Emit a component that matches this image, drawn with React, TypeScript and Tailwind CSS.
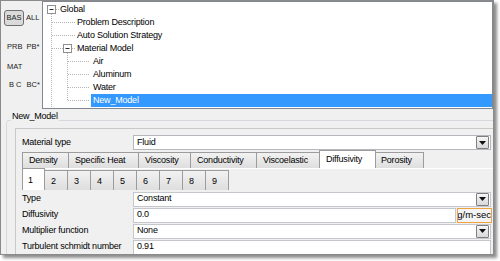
import React from "react";

function Arrow() {
  return (
    <div className="w-[13px] h-[13px] border border-[#7f7f7f] bg-gradient-to-b from-[#f6f6f6] to-[#d8d8d8] flex items-center justify-center rounded-[1px] shrink-0">
      <svg width="7" height="4" viewBox="0 0 7 4">
        <path d="M0 0H7L3.5 4Z" fill="#111" />
      </svg>
    </div>
  );
}

function TreeLines() {
  const d = "1 1";
  const c = "#b4b4b4";
  return (
    <svg className="absolute left-0 top-0 pointer-events-none" width="60" height="106" viewBox="0 0 60 106">
      <path d="M8.5 12V106" stroke={c} strokeDasharray={d} />
      <path d="M13 7.5H16" stroke={c} strokeDasharray={d} />
      <path d="M9 20.5H32" stroke={c} strokeDasharray={d} />
      <path d="M9 33.5H32" stroke={c} strokeDasharray={d} />
      <path d="M9 46.5H20" stroke={c} strokeDasharray={d} />
      <path d="M29 46.5H32" stroke={c} strokeDasharray={d} />
      <path d="M24.5 51V98.5" stroke={c} strokeDasharray={d} />
      <path d="M25 59.5H47" stroke={c} strokeDasharray={d} />
      <path d="M25 72.5H47" stroke={c} strokeDasharray={d} />
      <path d="M25 85.5H47" stroke={c} strokeDasharray={d} />
      <path d="M25 98.5H47" stroke={c} strokeDasharray={d} />
      <rect x="4.5" y="3.5" width="8" height="8" fill="#fff" stroke="#8e8f8f" />
      <path d="M6.5 7.5H10.5" stroke="#2b2b2b" />
      <rect x="20.5" y="42.5" width="8" height="8" fill="#fff" stroke="#8e8f8f" />
      <path d="M22.5 46.5H26.5" stroke="#2b2b2b" />
    </svg>
  );
}

function Tab({ label, w, selected }: { label: string; w: string; selected?: boolean }) {
  return (
    <div
      className={
        selected
          ? `${w} h-[18px] bg-white border border-b-0 border-[#9c9c9c] pl-[6px] pt-[2px] leading-[12px] -mx-[1px] relative z-10`
          : `${w} h-[16px] bg-gradient-to-b from-[#f2f2f2] to-[#dedede] border border-b-0 border-[#9c9c9c] border-r-0 last:border-r pl-[6px] leading-[15px]`
      }
    >
      {label}
    </div>
  );
}

function NumTab({ label, selected }: { label: string; selected?: boolean }) {
  return (
    <div
      className={
        selected
          ? "w-[23px] h-[22px] bg-white border border-b-0 border-[#9c9c9c] pl-[5px] pt-[5px] leading-[12px] relative z-10"
          : "w-[23px] h-[20px] bg-gradient-to-b from-[#f2f2f2] to-[#dedede] border border-b-0 border-l-0 border-[#9c9c9c] pl-[6px] pt-[4px] leading-[12px]"
      }
    >
      {label}
    </div>
  );
}

export default function App() {
  return (
    <div className="w-[500px] h-[261px] bg-white font-['Liberation_Sans',Arial,sans-serif] text-[9px] tracking-[-0.2px] text-black">
      <div className="w-[494px] h-[255px] bg-[#f0f0f0] border border-[#8a8a8a] overflow-hidden flex flex-col shadow-[3px_3px_3px_rgba(0,0,0,0.45)]">
        {/* top section */}
        <div className="flex h-[108px] shrink-0">
          <div className="w-[41px] shrink-0 flex flex-col text-[7.5px] tracking-normal text-[#222]">
            <div className="flex items-center mt-[9px] pl-[3px] h-[16px]">
              <div className="w-[20px] h-[16px] rounded-[3px] border border-[#6f6f6f] bg-[#dadada] flex items-center justify-center">
                BAS
              </div>
              <span className="ml-[2px]">ALL</span>
            </div>
            <div className="flex items-center mt-[15px] h-[12px] pl-[6px]">
              <span>PRB</span>
              <span className="ml-[4px]">PB*</span>
            </div>
            <div className="flex items-center mt-[8px] h-[12px] pl-[6px]">
              <span>MAT</span>
            </div>
            <div className="flex items-center mt-[6px] h-[12px] pl-[8px]">
              <span>B C</span>
              <span className="ml-[5px]">BC*</span>
            </div>
          </div>
          <div className="flex-1 bg-white border border-[#828790] relative pt-[1px] overflow-hidden">
            <TreeLines />
            <div className="h-[13px] flex items-center pl-[17px]">Global</div>
            <div className="h-[13px] flex items-center pl-[34px]">Problem Description</div>
            <div className="h-[13px] flex items-center pl-[34px]">Auto Solution Strategy</div>
            <div className="h-[13px] flex items-center pl-[34px]">Material Model</div>
            <div className="h-[13px] flex items-center pl-[50px]">Air</div>
            <div className="h-[13px] flex items-center pl-[50px]">Aluminum</div>
            <div className="h-[13px] flex items-center pl-[50px]">Water</div>
            <div className="h-[13px] flex pl-[48px]">
              <div className="flex-1 bg-[#3399ff] text-white flex items-center pl-[2px]">New_Model</div>
            </div>
          </div>
        </div>

        {/* group box */}
        <div className="ml-[5px] mt-[11px] relative">
          <div className="w-[520px] h-[200px] border border-[#d5d9dd] rounded-[3px] pt-[7px] pl-[8px]">
            <div className="w-[500px] h-[180px] border border-[#c9c9c9] bg-[#f0f0f0] pt-[6px] pl-[6px] flex flex-col">
              <div className="flex items-center h-[15px]">
                <div className="w-[111px] shrink-0">Material type</div>
                <div className="w-[358px] h-[15px] bg-white border border-[#b4b7bc] flex items-center justify-between pl-[3px] pr-[1px]">
                  <span>Fluid</span>
                  <Arrow />
                </div>
              </div>
              <div className="flex items-end h-[18px]">
                <Tab label="Density" w="w-[46px]" />
                <Tab label="Specific Heat" w="w-[70px]" />
                <Tab label="Viscosity" w="w-[52px]" />
                <Tab label="Conductivity" w="w-[66px]" />
                <Tab label="Viscoelastic" w="w-[64px]" />
                <Tab label="Diffusivity" w="w-[57px]" selected />
                <div className="w-[49px] h-[16px] bg-gradient-to-b from-[#f2f2f2] to-[#dedede] border border-b-0 border-l-0 border-[#9c9c9c] pl-[6px] leading-[15px]">
                  Porosity
                </div>
              </div>
              <div className="flex items-end h-[22px] border-t border-[#ffffff]">
                <NumTab label="1" selected />
                <NumTab label="2" />
                <NumTab label="3" />
                <NumTab label="4" />
                <NumTab label="5" />
                <NumTab label="6" />
                <NumTab label="7" />
                <NumTab label="8" />
                <NumTab label="9" />
              </div>
              <div className="flex flex-col mt-[1px]">
                <div className="flex items-center h-[16px]">
                  <div className="w-[111px] shrink-0">Type</div>
                  <div className="w-[358px] h-[15px] bg-white border border-[#c4c7cc] flex items-center justify-between pl-[3px] pr-[1px]">
                    <span>Constant</span>
                    <Arrow />
                  </div>
                </div>
                <div className="flex items-center h-[16px]">
                  <div className="w-[111px] shrink-0">Diffusivity</div>
                  <div className="w-[323px] h-[15px] bg-white border border-[#c4c7cc] flex items-center pl-[3px]">
                    <span>0.0</span>
                  </div>
                  <div className="w-[35px] h-[15px] ml-[1px] border border-[#f0a33c] bg-[#f4f4f4] overflow-hidden flex items-center justify-end whitespace-nowrap text-[9.5px] tracking-normal">
                    <span className="shrink-0">kg/m-sec</span>
                  </div>
                </div>
                <div className="flex items-center h-[16px]">
                  <div className="w-[111px] shrink-0">Multiplier function</div>
                  <div className="w-[358px] h-[15px] bg-white border border-[#c4c7cc] flex items-center justify-between pl-[3px] pr-[1px]">
                    <span>None</span>
                    <Arrow />
                  </div>
                </div>
                <div className="flex items-center h-[16px]">
                  <div className="w-[111px] shrink-0">Turbulent schmidt number</div>
                  <div className="w-[358px] h-[15px] bg-white border border-[#c4c7cc] flex items-center pl-[3px]">
                    <span>0.91</span>
                  </div>
                </div>
              </div>
            </div>
          </div>
          <span className="absolute left-[5px] -top-[9px] bg-[#f0f0f0] px-[1px] leading-[10px]">New_Model</span>
        </div>
      </div>
    </div>
  );
}
